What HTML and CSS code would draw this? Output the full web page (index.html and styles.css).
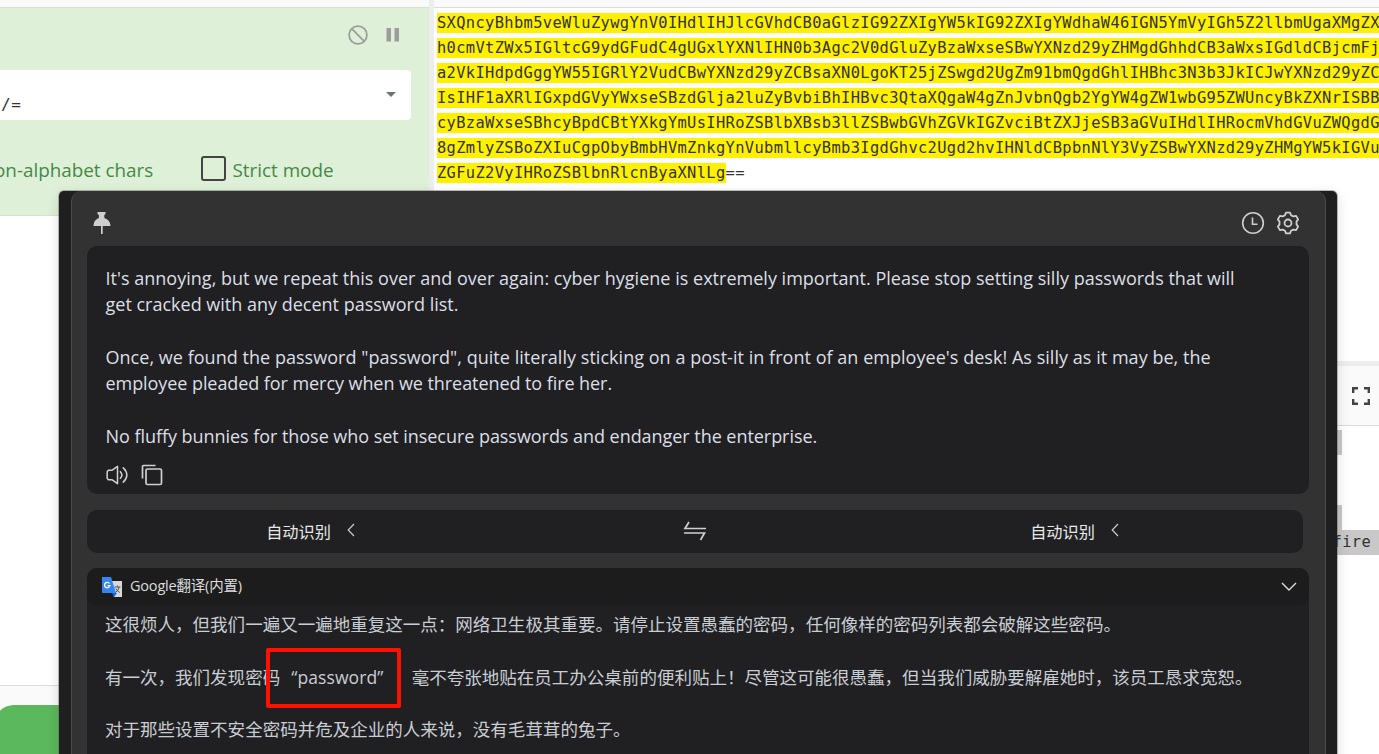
FILE: index.html
```html
<!DOCTYPE html>
<html lang="zh-CN">
<head>
<meta charset="utf-8">
<title>Translate</title>
<link rel="stylesheet" href="styles.css">
</head>
<body>
<div class="app">
  <div class="recipe">
    <div class="strip"></div>
    <div class="operation">
      <div class="op-icons">
        <svg width="20" height="20" viewBox="0 0 20 20" fill="none" stroke="#9b9f9b" stroke-width="1.8"><circle cx="10" cy="10" r="8.9"/><path d="M3.7 3.7l12.6 12.6"/></svg>
        <svg width="14" height="14" viewBox="0 0 14 14" fill="#9b9c9b"><path d="M0.5 0h4.5v13.5H.5zM8.500 0h4.500v13.500H8.500z"/></svg>
      </div>
      <div class="select"><span>/=</span><i class="caret"></i></div>
      <div class="checks"><span class="first">on-alphabet chars</span><i class="box"></i><span class="strict">Strict mode</span></div>
    </div>
    <div class="blank"></div>
    <div class="controls"><div class="bake"></div></div>
  </div>
  <div class="gutter"></div>
  <div class="io">
    <div class="strip"></div>
    <div class="input">
      <div><mark>SXQncyBhbm5veWluZywgYnV0IHdlIHJlcGVhdCB0aGlzIG92ZXIgYW5kIG92ZXIgYWdhaW46IGN5YmVyIGh5Z2llbmUgaXMgZX</mark></div>
      <div><mark>h0cmVtZWx5IGltcG9ydGFudC4gUGxlYXNlIHN0b3Agc2V0dGluZyBzaWxseSBwYXNzd29yZHMgdGhhdCB3aWxsIGdldCBjcmFj</mark></div>
      <div><mark>a2VkIHdpdGggYW55IGRlY2VudCBwYXNzd29yZCBsaXN0LgoKT25jZSwgd2UgZm91bmQgdGhlIHBhc3N3b3JkICJwYXNzd29yZC</mark></div>
      <div><mark>IsIHF1aXRlIGxpdGVyYWxseSBzdGlja2luZyBvbiBhIHBvc3QtaXQgaW4gZnJvbnQgb2YgYW4gZW1wbG95ZWUncyBkZXNrISBB</mark></div>
      <div><mark>cyBzaWxseSBhcyBpdCBtYXkgYmUsIHRoZSBlbXBsb3llZSBwbGVhZGVkIGZvciBtZXJjeSB3aGVuIHdlIHRocmVhdGVuZWQgdG</mark></div>
      <div><mark>8gZmlyZSBoZXIuCgpObyBmbHVmZnkgYnVubmllcyBmb3IgdGhvc2Ugd2hvIHNldCBpbnNlY3VyZSBwYXNzd29yZHMgYW5kIGVu</mark></div>
      <div><mark>ZGFuZ2VyIHRoZSBlbnRlcnByaXNlLg</mark>==</div>
    </div>
    <div class="split"></div>
    <div class="out-head">
      <svg width="18" height="18" viewBox="0 0 18 18" fill="none" stroke="#444" stroke-width="2.4"><path d="M1.200 6V1.200H6M12 1.200h4.800V6M16.800 12v4.800H12M6 16.800H1.200V12"/></svg>
    </div>
    <div class="output"><i></i><b></b><i></i><p>fire</p></div>
  </div>
</div>

<div class="window">
  <div class="panel">
    <div class="titlebar">
      <svg width="18" height="24" viewBox="0 0 18 24" fill="#cfcfcf"><path d="M4.500 1h8v2l-1.200 1v3c3 1 5.900 3 6.200 8H.5c.3-5 2.700-7 5.400-8V4L4.500 3zM8 15h1.700v8H8z"/></svg>
      <span class="grow"></span>
      <svg width="24" height="24" viewBox="0 0 24 24" fill="none" stroke="#cfcfcf" stroke-width="1.600"><circle cx="12" cy="12" r="10.300"/><path d="M11.500 6.500v6.700h5"/></svg>
      <svg class="gear" width="24" height="24" viewBox="0 0 24 24" fill="none" stroke="#cfcfcf" stroke-width="1.800" stroke-linejoin="round"><circle cx="12" cy="12" r="3.500"/><path d="M10 1.700h4l1 2.500 2.300 1.200 2.800-.5 2 3.500-1.600 2.200v2.800l1.600 2.200-2 3.500-2.800-.5-2.300 1.200-1 2.500h-4l-1-2.500-2.300-1.200-2.800.5-2-3.500 1.600-2.200v-2.800L1.900 8.400l2-3.500 2.800.5L9 4.200z"/></svg>
    </div>
    <div class="source">
      <p class="l1">It's annoying, but we repeat this over and over again: cyber hygiene is extremely important. Please stop setting silly passwords that will</p>
      <p class="l2">get cracked with any decent password list.</p>
      <p></p>
      <p class="l3">Once, we found the password "password", quite literally sticking on a post-it in front of an employee's desk! As silly as it may be, the</p>
      <p class="l4">employee pleaded for mercy when we threatened to fire her.</p>
      <p></p>
      <p class="l5">No fluffy bunnies for those who set insecure passwords and endanger the enterprise.</p>
      <div class="actions">
        <svg width="23" height="22" viewBox="0 0 24 22" fill="none" stroke="#cfcfcf" stroke-width="1.600" stroke-linejoin="round" stroke-linecap="round"><path d="M2.500 6h4L12 2v18l-5.500-4h-4L1.200 14.500v-7zM15 7.500c1.800 2 1.800 5 0 7M18 3.500c5 4.500 5 10.500 0 15"/></svg>
        <svg width="22" height="22" viewBox="0 0 22 22" fill="none" stroke="#cfcfcf" stroke-width="1.700"><rect x="5" y="5" width="15.500" height="15.500" rx="1.500"/><path d="M1.500 14.500v-12q0-1 1-1h12"/></svg>
      </div>
    </div>
    <div class="langs">
      <div class="lang"><span>自动识别</span><svg width="8" height="14" viewBox="0 0 8 14" fill="none" stroke="#ccc" stroke-width="1.200"><path d="M7 1L1.200 7 7 13"/></svg></div>
      <svg width="24" height="20" viewBox="0 0 24 20" fill="none" stroke="#cfcfcf" stroke-width="1.700"><path d="M6 1L2 7.500H23M1 12h20.500L17.500 19"/></svg>
      <div class="lang"><span>自动识别</span><svg width="8" height="14" viewBox="0 0 8 14" fill="none" stroke="#ccc" stroke-width="1.200"><path d="M7 1L1.200 7 7 13"/></svg></div>
    </div>
    <div class="result">
      <div class="result-head">
        <svg width="22" height="22" viewBox="0 0 22 22"><path d="M10 5h11v16H13z" fill="#d9d9d9"/><path d="M11 17h5l-3 4z" fill="#1565d8"/><path d="M1 1h9l5 16H1.500L1 16.500z" fill="#3387f5"/><path d="M8.500 7.500a2.700 2.700 0 1 0 .4 2.200H6.500" fill="none" stroke="#fff" stroke-width="1.300"/><path d="M13.500 11h6M16.500 9.500V11M14.500 16.500q3-2 3.800-5.500M14.800 12.500q1.500 3 4 4" fill="none" stroke="#555" stroke-width="1"/></svg>
        <span>Google翻译(内置)</span>
        <svg width="16" height="10" viewBox="0 0 16 10" fill="none" stroke="#ddd" stroke-width="1.400"><path d="M1 1l7 7 7-7"/></svg>
      </div>
      <div class="result-body">
        <p>这很烦人，但我们一遍又一遍地重复这一点：网络卫生极其重要。请停止设置愚蠢的密码，任何像样的密码列表都会破解这些密码。</p>
        <p class="marked"><span>有一次，我们发现密码</span><span class="quoted">“password”</span><span>毫不夸张地贴在员工办公桌前的便利贴上！尽管这可能很愚蠢，但当我们威胁要解雇她时，该员工恳求宽恕。</span></p>
        <p>对于那些设置不安全密码并危及企业的人来说，没有毛茸茸的兔子。</p>
      </div>
    </div>
  </div>
  <div class="highlight"></div>
</div>
</body>
</html>
```

FILE: styles.css
```css
* { box-sizing: border-box; }
body { margin: 0; width: 1379px; height: 754px; overflow: hidden; position: relative; background: #fff; font-family: "Open Sans", "Noto Sans CJK SC", sans-serif; }
p { margin: 0; }
svg { display: block; flex: none; }
.app { display: flex; height: 754px; }
.recipe { width: 429px; display: flex; flex-direction: column; }
.gutter { width: 5px; background: #ededed; }
.io { flex: 1; min-width: 0; overflow: hidden; display: flex; flex-direction: column; }
.strip { height: 8px; background: #fafafa; border-bottom: 1px solid #dcdcdc; flex: none; }
.operation { height: 208px; background: #dff0d8; border-bottom: 1px solid #d0e6c4; padding-top: 17px; flex: none; }
.op-icons { display: flex; align-items: center; justify-content: flex-end; gap: 18px; padding-right: 29px; height: 19px; }
.select { margin-top: 26px; width: 411px; height: 50px; background: #fff; border-radius: 0 4px 4px 0; display: flex; justify-content: space-between; align-items: center; padding-right: 15px; }
.select span { font: 16px "DejaVu Sans Mono", monospace; color: #333; padding-top: 18px; margin-left: 1px; letter-spacing: .5px; }
.caret { border: 5px solid transparent; border-top-color: #69737d; border-bottom: 0; margin-top: -1px; }
.checks { display: flex; align-items: center; margin-top: 34px; height: 28px; color: #468847; font-size: 18.850px; white-space: nowrap; }
.first { width: 201px; margin-left: -6px; }
.first, .strict { padding-top: 3px; }
.box { width: 25px; height: 25px; border: 2px solid #444; border-radius: 3px; margin: 0 6.500px 0 6px; }
.blank { flex: 1; }
.controls { height: 69px; background: #fafafa; border-top: 1px solid #dcdcdc; padding-top: 19px; }
.bake { height: 60px; margin-left: -6px; background: #5cb85c; border-radius: 20px 0 0 0; }
.input { height: 353px; padding: 3px 0 0 3px; font: 15.4px/25px "DejaVu Sans Mono", monospace; letter-spacing: .354px; white-space: nowrap; color: #333; flex: none; }
.input div { height: 25px; }
.input mark { display: inline-block; height: 20px; line-height: 21px; background: #fff000; color: #333; }
.split { height: 5px; background: #ededed; flex: none; }
.out-head { height: 60px; background: #fafafa; border-bottom: 1px solid #dcdcdc; display: flex; align-items: center; justify-content: flex-end; padding-right: 9px; flex: none; }
.output { padding-top: 4px; display: flex; flex-direction: column; }
.output i { height: 25px; width: 908px; background: #c8c8c8; }
.output b { height: 50px; }
.output p { height: 25px; background: #c8c8c8; color: #333; font: 15.4px/25px "DejaVu Sans Mono", monospace; letter-spacing: .354px; text-align: right; padding-right: 8px; }

.window { position: absolute; left: 59px; top: 191px; width: 1278px; height: 575px; background: #1f1f1f; border-radius: 5px 5px 0 0; padding: 0 11px 0 12px; box-shadow: 0 0 0 1px rgba(90,90,90,.4), 0 4px 14px rgba(0,0,0,.14); }
.panel { height: 575px; background: #323232; border: 1px solid #4b4b4b; border-top: 0; border-radius: 10px 10px 0 0; padding: 0 16px 0 15px; }
.titlebar { height: 55px; display: flex; align-items: center; padding: 8px 9px 0 6px; }
.grow { flex: 1; }
.gear { margin-left: 11px; }
.source { height: 248px; background: #202022; border-radius: 10px; padding: 19px 18.5px 0; color: #dcdfe6; font-size: 18px; line-height: 26.35px; white-space: nowrap; }
.source p { height: 26.35px; }
.l1 { letter-spacing: .016px; }
.l3 { letter-spacing: .036px; }
.l4 { letter-spacing: -.07px; }
.l5 { letter-spacing: -.045px; }
.actions { display: flex; gap: 12px; margin-top: 15px; align-items: center; }
.langs { margin-top: 16px; width: 1216px; height: 43px; border-radius: 10px; background: #202022; display: flex; align-items: center; }
.lang { width: 596px; flex: none; display: flex; align-items: center; justify-content: center; gap: 16px; font: 16.200px/24px "Noto Sans CJK SC", sans-serif; color: #e8e8e8; padding: 0 149px 1px 0; }
.lang svg { margin-bottom: 2px; }
.lang + svg { margin-bottom: 2px; }
.lang + svg + .lang { padding-right: 0; padding-left: 139px; }
.result { margin-top: 15px; height: 200px; background: #202022; border-radius: 10px 10px 0 0; }
.result-head { height: 37px; background: #1c1c1c; border-radius: 10px; display: flex; align-items: center; padding: 0 12px 0 14px; font: 14.500px "Open Sans", "Noto Sans CJK SC", sans-serif; color: #ddd; }
.result-head span { flex: 1; margin: -4px 0 0 7px; letter-spacing: -.200px; }
.result-body { padding: 6px 18px; font: 17.520px/26px "Noto Sans CJK SC", sans-serif; color: #c9cdd4; white-space: nowrap; display: flex; flex-direction: column; gap: 26.600px; }
.result-body p { height: 26px; }
.marked { display: flex; }
.quoted { width: 131.500px; padding-left: 11px; font-family: "Open Sans", sans-serif; letter-spacing: .1px; }
.highlight { position: absolute; left: 207px; top: 457px; width: 135px; height: 60px; border: 4px solid #ff1100; border-radius: 2px; }
```
